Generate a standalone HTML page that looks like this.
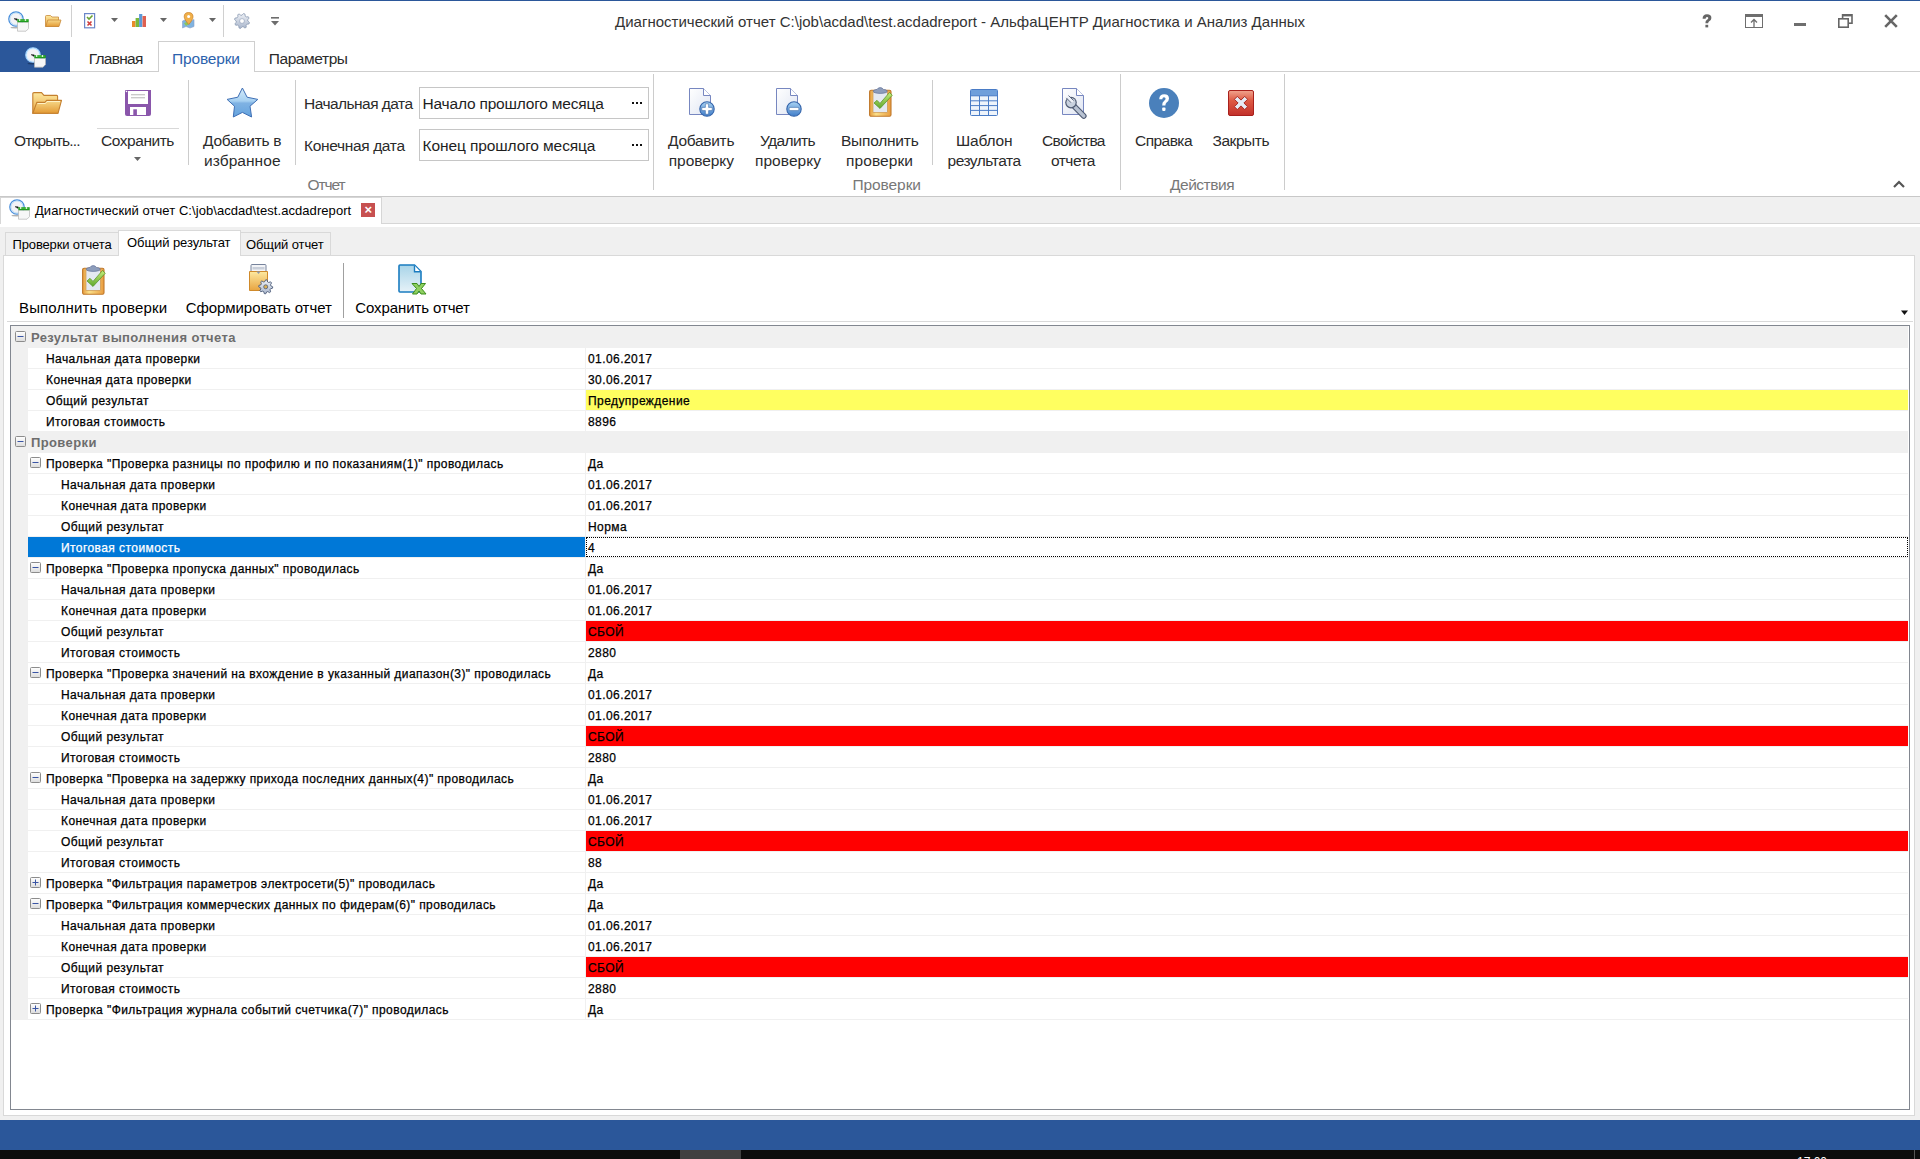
<!DOCTYPE html><html><head><meta charset="utf-8"><style>
html,body{margin:0;padding:0;}
body{width:1920px;height:1159px;position:relative;overflow:hidden;background:#fff;font-family:"Liberation Sans",sans-serif;}
.t{position:absolute;white-space:nowrap;}
.g{-webkit-text-stroke:0.25px currentColor;}
.r{position:absolute;}
</style></head><body>
<svg width="0" height="0" style="position:absolute"><defs>
<linearGradient id="eg" x1="0" y1="0" x2="0" y2="1"><stop offset="0" stop-color="#fff"/><stop offset="1" stop-color="#dcdcdc"/></linearGradient>
<linearGradient id="gFold" x1="0" y1="0" x2="0" y2="1"><stop offset="0" stop-color="#fde9a0"/><stop offset="1" stop-color="#e8a440"/></linearGradient>
<linearGradient id="gFoldF" x1="0" y1="0" x2="0" y2="1"><stop offset="0" stop-color="#f7d98a"/><stop offset="1" stop-color="#e39a34"/></linearGradient>
<linearGradient id="gDoc" x1="0" y1="0" x2="1" y2="1"><stop offset="0" stop-color="#ffffff"/><stop offset="1" stop-color="#dfe5f2"/></linearGradient>
<linearGradient id="gBall" x1="0" y1="0" x2="0" y2="1"><stop offset="0" stop-color="#a9d3f3"/><stop offset="1" stop-color="#3f7cc8"/></linearGradient>
<linearGradient id="gStar" x1="0" y1="0" x2="0" y2="1"><stop offset="0" stop-color="#d6ecfa"/><stop offset="0.45" stop-color="#a6d0f1"/><stop offset="0.52" stop-color="#7fb2e3"/><stop offset="1" stop-color="#64a3de"/></linearGradient>
<linearGradient id="gRed" x1="0" y1="0" x2="0" y2="1"><stop offset="0" stop-color="#f0a48e"/><stop offset="0.4" stop-color="#de5a44"/><stop offset="1" stop-color="#c2302a"/></linearGradient>
<linearGradient id="gClip" x1="0" y1="0" x2="1" y2="0"><stop offset="0" stop-color="#e59a3c"/><stop offset="0.3" stop-color="#fbe08a"/><stop offset="1" stop-color="#e99d3f"/></linearGradient>
<linearGradient id="gChk" x1="0" y1="0" x2="0" y2="1"><stop offset="0" stop-color="#c6ec7a"/><stop offset="1" stop-color="#5fa82c"/></linearGradient>
<linearGradient id="gGear" x1="0" y1="0" x2="0" y2="1"><stop offset="0" stop-color="#eef1f6"/><stop offset="1" stop-color="#a9b6cc"/></linearGradient>
<linearGradient id="gXl" x1="0" y1="0" x2="0" y2="1"><stop offset="0" stop-color="#a8d4e8"/><stop offset="1" stop-color="#e6f2f8"/></linearGradient>
</defs></svg>
<div class="r" style="left:0px;top:0px;width:1920px;height:1px;background:#2b579a;"></div>
<div class="r" style="left:71px;top:5px;width:1px;height:32px;background:#d0d0d0;"></div>
<div class="r" style="left:223px;top:5px;width:1px;height:32px;background:#d0d0d0;"></div>
<div class="t " style="left:615.0px;top:14.30px;font-size:15px;line-height:15px;color:#333;font-weight:normal;letter-spacing:0.012px;">Диагностический отчет C:\job\acdad\test.acdadreport - АльфаЦЕНТР Диагностика и Анализ Данных</div>
<div class="r" style="left:0px;top:41px;width:70px;height:31px;background:#2b579a;"></div>
<div class="r" style="left:70px;top:71px;width:88px;height:1px;background:#cfcfcf;"></div>
<div class="r" style="left:254px;top:71px;width:1666px;height:1px;background:#cfcfcf;"></div>
<div class="r" style="left:158px;top:41px;width:95px;height:30px;border:1px solid #cfcfcf;border-bottom:none;background:#fff"></div>
<div class="t " style="left:88.75px;top:51.48px;font-size:15.5px;line-height:15.5px;color:#2b2b2b;font-weight:normal;letter-spacing:-0.742px;">Главная</div>
<div class="t " style="left:172.0px;top:51.48px;font-size:15.5px;line-height:15.5px;color:#2c62ad;font-weight:normal;letter-spacing:-0.161px;">Проверки</div>
<div class="t " style="left:268.75px;top:51.48px;font-size:15.5px;line-height:15.5px;color:#2b2b2b;font-weight:normal;letter-spacing:-0.422px;">Параметры</div>
<div class="r" style="left:0px;top:196px;width:1920px;height:1px;background:#c8c8c8;"></div>
<div class="r" style="left:188px;top:80px;width:1px;height:85px;background:#cccccc;"></div>
<div class="r" style="left:295px;top:80px;width:1px;height:85px;background:#cccccc;"></div>
<div class="r" style="left:653px;top:74px;width:1px;height:116px;background:#cccccc;"></div>
<div class="r" style="left:932px;top:80px;width:1px;height:85px;background:#cccccc;"></div>
<div class="r" style="left:1120px;top:74px;width:1px;height:116px;background:#cccccc;"></div>
<div class="r" style="left:1284px;top:74px;width:1px;height:116px;background:#cccccc;"></div>
<div class="r" style="left:97px;top:128px;width:82px;height:1px;background:#d8d8d8;"></div>
<div class="t " style="left:14.0px;top:133.48px;font-size:15.5px;line-height:15.5px;color:#2b2b2b;font-weight:normal;letter-spacing:-0.806px;">Открыть...</div>
<div class="t " style="left:101.0px;top:133.48px;font-size:15.5px;line-height:15.5px;color:#2b2b2b;font-weight:normal;letter-spacing:-0.45px;">Сохранить</div>
<div class="t " style="left:203.0px;top:133.48px;font-size:15.5px;line-height:15.5px;color:#2b2b2b;font-weight:normal;letter-spacing:-0.278px;">Добавить в</div>
<div class="t " style="left:204.0px;top:153.48px;font-size:15.5px;line-height:15.5px;color:#2b2b2b;font-weight:normal;letter-spacing:0.059px;">избранное</div>
<div class="t " style="left:304.0px;top:95.98px;font-size:15.5px;line-height:15.5px;color:#2b2b2b;font-weight:normal;letter-spacing:-0.538px;">Начальная дата</div>
<div class="t " style="left:304.0px;top:137.98px;font-size:15.5px;line-height:15.5px;color:#2b2b2b;font-weight:normal;letter-spacing:-0.344px;">Конечная дата</div>
<div class="r" style="left:419px;top:87px;width:228px;height:30px;border:1px solid #c6c6c6;background:#fff"></div>
<div class="r" style="left:419px;top:129px;width:228px;height:30px;border:1px solid #c6c6c6;background:#fff"></div>
<div class="t " style="left:422.5px;top:95.98px;font-size:15.5px;line-height:15.5px;color:#1e1e1e;font-weight:normal;letter-spacing:-0.196px;">Начало прошлого месяца</div>
<div class="t " style="left:422.5px;top:137.98px;font-size:15.5px;line-height:15.5px;color:#1e1e1e;font-weight:normal;letter-spacing:-0.106px;">Конец прошлого месяца</div>
<div class="r" style="left:632px;top:102px;width:2px;height:2px;background:#111;"></div>
<div class="r" style="left:636px;top:102px;width:2px;height:2px;background:#111;"></div>
<div class="r" style="left:640px;top:102px;width:2px;height:2px;background:#111;"></div>
<div class="r" style="left:632px;top:144px;width:2px;height:2px;background:#111;"></div>
<div class="r" style="left:636px;top:144px;width:2px;height:2px;background:#111;"></div>
<div class="r" style="left:640px;top:144px;width:2px;height:2px;background:#111;"></div>
<div class="t " style="left:307.5px;top:176.98px;font-size:15.5px;line-height:15.5px;color:#777;font-weight:normal;letter-spacing:-1.1px;">Отчет</div>
<div class="t " style="left:668.0px;top:133.48px;font-size:15.5px;line-height:15.5px;color:#2b2b2b;font-weight:normal;letter-spacing:-0.286px;">Добавить</div>
<div class="t " style="left:668.75px;top:153.48px;font-size:15.5px;line-height:15.5px;color:#2b2b2b;font-weight:normal;letter-spacing:-0.054px;">проверку</div>
<div class="t " style="left:760.0px;top:133.48px;font-size:15.5px;line-height:15.5px;color:#2b2b2b;font-weight:normal;letter-spacing:-0.604px;">Удалить</div>
<div class="t " style="left:755.0px;top:153.48px;font-size:15.5px;line-height:15.5px;color:#2b2b2b;font-weight:normal;letter-spacing:0.054px;">проверку</div>
<div class="t " style="left:841.0px;top:133.48px;font-size:15.5px;line-height:15.5px;color:#2b2b2b;font-weight:normal;letter-spacing:-0.234px;">Выполнить</div>
<div class="t " style="left:846.0px;top:153.48px;font-size:15.5px;line-height:15.5px;color:#2b2b2b;font-weight:normal;letter-spacing:0.089px;">проверки</div>
<div class="t " style="left:956.0px;top:133.48px;font-size:15.5px;line-height:15.5px;color:#2b2b2b;font-weight:normal;letter-spacing:-0.175px;">Шаблон</div>
<div class="t " style="left:947.5px;top:153.48px;font-size:15.5px;line-height:15.5px;color:#2b2b2b;font-weight:normal;letter-spacing:-0.486px;">результата</div>
<div class="t " style="left:1042.0px;top:133.48px;font-size:15.5px;line-height:15.5px;color:#2b2b2b;font-weight:normal;letter-spacing:-0.661px;">Свойства</div>
<div class="t " style="left:1051.0px;top:153.48px;font-size:15.5px;line-height:15.5px;color:#2b2b2b;font-weight:normal;letter-spacing:-0.525px;">отчета</div>
<div class="t " style="left:852.5px;top:177.48px;font-size:15.5px;line-height:15.5px;color:#777;font-weight:normal;letter-spacing:-0.089px;">Проверки</div>
<div class="t " style="left:1135.0px;top:133.48px;font-size:15.5px;line-height:15.5px;color:#2b2b2b;font-weight:normal;letter-spacing:-0.542px;">Справка</div>
<div class="t " style="left:1212.5px;top:133.48px;font-size:15.5px;line-height:15.5px;color:#2b2b2b;font-weight:normal;letter-spacing:-0.458px;">Закрыть</div>
<div class="t " style="left:1170.0px;top:177.48px;font-size:15.5px;line-height:15.5px;color:#777;font-weight:normal;letter-spacing:-0.482px;">Действия</div>
<div class="r" style="left:0px;top:197px;width:1920px;height:923px;background:#f0f0f0;"></div>
<div class="r" style="left:0px;top:197px;width:381px;height:30px;background:#fff;"></div>
<div class="r" style="left:0px;top:197px;width:1px;height:28px;background:#d6d6d6;"></div>
<div class="r" style="left:0px;top:197px;width:381px;height:1px;background:#d6d6d6;"></div>
<div class="r" style="left:381px;top:197px;width:1px;height:27px;background:#d6d6d6;"></div>
<div class="r" style="left:382px;top:223px;width:1538px;height:1px;background:#d6d6d6;"></div>
<div class="r" style="left:0px;top:224px;width:1920px;height:3px;background:#fff;"></div>
<div class="t " style="left:35.0px;top:204.00px;font-size:13px;line-height:13px;color:#000;font-weight:normal;letter-spacing:0.062px;">Диагностический отчет C:\job\acdad\test.acdadreport</div>
<div class="r" style="left:361px;top:203px;width:14px;height:14px;background:#c75050;"></div>
<div class="t " style="left:364.5px;top:203.00px;font-size:13px;line-height:13px;color:#fff;font-weight:bold;letter-spacing:0px;">×</div>
<div class="r" style="left:5px;top:232px;width:112px;height:23px;border:1px solid #d9d9d9;border-bottom:none;background:#f0f0f0"></div>
<div class="r" style="left:240px;top:232px;width:89px;height:23px;border:1px solid #d9d9d9;border-bottom:none;background:#f0f0f0"></div>
<div class="r" style="left:118px;top:230px;width:121px;height:26px;border:1px solid #d9d9d9;border-bottom:none;background:#fff"></div>
<div class="t " style="left:12.5px;top:237.50px;font-size:13px;line-height:13px;color:#000;font-weight:normal;letter-spacing:-0.137px;">Проверки отчета</div>
<div class="t " style="left:127.0px;top:235.50px;font-size:13px;line-height:13px;color:#000;font-weight:normal;letter-spacing:-0.08px;">Общий результат</div>
<div class="t " style="left:246.0px;top:237.50px;font-size:13px;line-height:13px;color:#000;font-weight:normal;letter-spacing:-0.113px;">Общий отчет</div>
<div class="r" style="left:3px;top:255px;width:1910px;height:859px;border:1px solid #d9d9d9;background:#fff"></div>
<div class="r" style="left:119px;top:255px;width:121px;height:1px;background:#fff;"></div>
<div class="r" style="left:7px;top:321px;width:1906px;height:1px;background:#d9d9d9;"></div>
<div class="r" style="left:343px;top:263px;width:1px;height:55px;background:#a0a0a0;"></div>
<div class="t " style="left:19.0px;top:300.30px;font-size:15px;line-height:15px;color:#000;font-weight:normal;letter-spacing:0.154px;">Выполнить проверки</div>
<div class="t " style="left:185.8px;top:300.30px;font-size:15px;line-height:15px;color:#000;font-weight:normal;letter-spacing:-0.079px;">Сформировать отчет</div>
<div class="t " style="left:355.3px;top:300.30px;font-size:15px;line-height:15px;color:#000;font-weight:normal;letter-spacing:-0.102px;">Сохранить отчет</div>
<svg class="r" style="left:1900px;top:310px" width="9" height="6"><path d="M1 0.5h7L4.5 5z" fill="#111"/></svg>
<div class="r" style="left:10px;top:325px;width:1898px;height:783px;border:1px solid #828790;background:#fff"></div>
<svg width="0" height="0" style="position:absolute"><defs><linearGradient id="eg" x1="0" y1="0" x2="0" y2="1"><stop offset="0" stop-color="#fff"/><stop offset="1" stop-color="#dcdcdc"/></linearGradient></defs></svg>
<div class="r" style="left:11px;top:326px;width:1897px;height:21px;background:#f0f0f0;"></div>
<div class="r" style="left:11px;top:347px;width:1897px;height:1px;background:#f0f0f0;"></div>
<svg class="r" style="left:15px;top:331px" width="11" height="11" viewBox="0 0 11 11"><rect x="0.5" y="0.5" width="10" height="10" rx="1" fill="url(#eg)" stroke="#8c8c8c"/><path d="M2.5 5.5h6" stroke="#3a55a5" stroke-width="1"/></svg>
<div class="t " style="left:31px;top:330.50px;font-size:13px;line-height:13px;color:#6d6d6d;font-weight:bold;letter-spacing:0.38px;">Результат выполнения отчета</div>
<div class="r" style="left:11px;top:348px;width:17px;height:21px;background:#f0f0f0;"></div>
<div class="r" style="left:28px;top:368px;width:1880px;height:1px;background:#f0f0f0;"></div>
<div class="r" style="left:585px;top:348px;width:1px;height:20px;background:#f0f0f0;"></div>
<div class="t g" style="left:46px;top:352.84px;font-size:12px;line-height:12px;color:#000;font-weight:normal;letter-spacing:0.43px;">Начальная дата проверки</div>
<div class="t g" style="left:588px;top:352.84px;font-size:12px;line-height:12px;color:#000;font-weight:normal;letter-spacing:0.43px;">01.06.2017</div>
<div class="r" style="left:11px;top:369px;width:17px;height:21px;background:#f0f0f0;"></div>
<div class="r" style="left:28px;top:389px;width:1880px;height:1px;background:#f0f0f0;"></div>
<div class="r" style="left:585px;top:369px;width:1px;height:20px;background:#f0f0f0;"></div>
<div class="t g" style="left:46px;top:373.84px;font-size:12px;line-height:12px;color:#000;font-weight:normal;letter-spacing:0.43px;">Конечная дата проверки</div>
<div class="t g" style="left:588px;top:373.84px;font-size:12px;line-height:12px;color:#000;font-weight:normal;letter-spacing:0.43px;">30.06.2017</div>
<div class="r" style="left:11px;top:390px;width:17px;height:21px;background:#f0f0f0;"></div>
<div class="r" style="left:28px;top:410px;width:1880px;height:1px;background:#f0f0f0;"></div>
<div class="r" style="left:585px;top:390px;width:1px;height:20px;background:#f0f0f0;"></div>
<div class="t g" style="left:46px;top:394.84px;font-size:12px;line-height:12px;color:#000;font-weight:normal;letter-spacing:0.43px;">Общий результат</div>
<div class="r" style="left:586px;top:390px;width:1322px;height:20px;background:#ffff60;"></div>
<div class="t g" style="left:588px;top:394.84px;font-size:12px;line-height:12px;color:#000;font-weight:normal;letter-spacing:0.43px;">Предупреждение</div>
<div class="r" style="left:11px;top:411px;width:17px;height:21px;background:#f0f0f0;"></div>
<div class="r" style="left:28px;top:431px;width:1880px;height:1px;background:#f0f0f0;"></div>
<div class="r" style="left:585px;top:411px;width:1px;height:20px;background:#f0f0f0;"></div>
<div class="t g" style="left:46px;top:415.84px;font-size:12px;line-height:12px;color:#000;font-weight:normal;letter-spacing:0.43px;">Итоговая стоимость</div>
<div class="t g" style="left:588px;top:415.84px;font-size:12px;line-height:12px;color:#000;font-weight:normal;letter-spacing:0.43px;">8896</div>
<div class="r" style="left:11px;top:431px;width:1897px;height:21px;background:#f0f0f0;"></div>
<div class="r" style="left:11px;top:452px;width:1897px;height:1px;background:#f0f0f0;"></div>
<svg class="r" style="left:15px;top:436px" width="11" height="11" viewBox="0 0 11 11"><rect x="0.5" y="0.5" width="10" height="10" rx="1" fill="url(#eg)" stroke="#8c8c8c"/><path d="M2.5 5.5h6" stroke="#3a55a5" stroke-width="1"/></svg>
<div class="t " style="left:31px;top:435.50px;font-size:13px;line-height:13px;color:#6d6d6d;font-weight:bold;letter-spacing:0.38px;">Проверки</div>
<div class="r" style="left:11px;top:453px;width:17px;height:21px;background:#f0f0f0;"></div>
<div class="r" style="left:28px;top:473px;width:1880px;height:1px;background:#f0f0f0;"></div>
<div class="r" style="left:585px;top:453px;width:1px;height:20px;background:#f0f0f0;"></div>
<svg class="r" style="left:30px;top:457px" width="11" height="11" viewBox="0 0 11 11"><rect x="0.5" y="0.5" width="10" height="10" rx="1" fill="url(#eg)" stroke="#8c8c8c"/><path d="M2.5 5.5h6" stroke="#3a55a5" stroke-width="1"/></svg>
<div class="t g" style="left:46px;top:457.84px;font-size:12px;line-height:12px;color:#000;font-weight:normal;letter-spacing:0.43px;">Проверка &quot;Проверка разницы по профилю и по показаниям(1)&quot; проводилась</div>
<div class="t g" style="left:588px;top:457.84px;font-size:12px;line-height:12px;color:#000;font-weight:normal;letter-spacing:0.43px;">Да</div>
<div class="r" style="left:11px;top:474px;width:17px;height:21px;background:#f0f0f0;"></div>
<div class="r" style="left:28px;top:494px;width:1880px;height:1px;background:#f0f0f0;"></div>
<div class="r" style="left:585px;top:474px;width:1px;height:20px;background:#f0f0f0;"></div>
<div class="t g" style="left:61px;top:478.84px;font-size:12px;line-height:12px;color:#000;font-weight:normal;letter-spacing:0.43px;">Начальная дата проверки</div>
<div class="t g" style="left:588px;top:478.84px;font-size:12px;line-height:12px;color:#000;font-weight:normal;letter-spacing:0.43px;">01.06.2017</div>
<div class="r" style="left:11px;top:495px;width:17px;height:21px;background:#f0f0f0;"></div>
<div class="r" style="left:28px;top:515px;width:1880px;height:1px;background:#f0f0f0;"></div>
<div class="r" style="left:585px;top:495px;width:1px;height:20px;background:#f0f0f0;"></div>
<div class="t g" style="left:61px;top:499.84px;font-size:12px;line-height:12px;color:#000;font-weight:normal;letter-spacing:0.43px;">Конечная дата проверки</div>
<div class="t g" style="left:588px;top:499.84px;font-size:12px;line-height:12px;color:#000;font-weight:normal;letter-spacing:0.43px;">01.06.2017</div>
<div class="r" style="left:11px;top:516px;width:17px;height:21px;background:#f0f0f0;"></div>
<div class="r" style="left:28px;top:536px;width:1880px;height:1px;background:#f0f0f0;"></div>
<div class="r" style="left:585px;top:516px;width:1px;height:20px;background:#f0f0f0;"></div>
<div class="t g" style="left:61px;top:520.84px;font-size:12px;line-height:12px;color:#000;font-weight:normal;letter-spacing:0.43px;">Общий результат</div>
<div class="t g" style="left:588px;top:520.84px;font-size:12px;line-height:12px;color:#000;font-weight:normal;letter-spacing:0.43px;">Норма</div>
<div class="r" style="left:11px;top:537px;width:17px;height:21px;background:#f0f0f0;"></div>
<div class="r" style="left:28px;top:557px;width:1880px;height:1px;background:#f0f0f0;"></div>
<div class="r" style="left:585px;top:537px;width:1px;height:20px;background:#f0f0f0;"></div>
<div class="r" style="left:28px;top:537px;width:557px;height:20px;background:#0078d7;"></div>
<div class="t g" style="left:61px;top:541.84px;font-size:12px;line-height:12px;color:#fff;font-weight:normal;letter-spacing:0.43px;">Итоговая стоимость</div>
<div class="r" style="left:586px;top:537px;width:1320px;height:18px;border:1px dotted #000"></div>
<div class="t g" style="left:588px;top:541.84px;font-size:12px;line-height:12px;color:#000;font-weight:normal;letter-spacing:0.43px;">4</div>
<div class="r" style="left:11px;top:558px;width:17px;height:21px;background:#f0f0f0;"></div>
<div class="r" style="left:28px;top:578px;width:1880px;height:1px;background:#f0f0f0;"></div>
<div class="r" style="left:585px;top:558px;width:1px;height:20px;background:#f0f0f0;"></div>
<svg class="r" style="left:30px;top:562px" width="11" height="11" viewBox="0 0 11 11"><rect x="0.5" y="0.5" width="10" height="10" rx="1" fill="url(#eg)" stroke="#8c8c8c"/><path d="M2.5 5.5h6" stroke="#3a55a5" stroke-width="1"/></svg>
<div class="t g" style="left:46px;top:562.84px;font-size:12px;line-height:12px;color:#000;font-weight:normal;letter-spacing:0.43px;">Проверка &quot;Проверка пропуска данных&quot; проводилась</div>
<div class="t g" style="left:588px;top:562.84px;font-size:12px;line-height:12px;color:#000;font-weight:normal;letter-spacing:0.43px;">Да</div>
<div class="r" style="left:11px;top:579px;width:17px;height:21px;background:#f0f0f0;"></div>
<div class="r" style="left:28px;top:599px;width:1880px;height:1px;background:#f0f0f0;"></div>
<div class="r" style="left:585px;top:579px;width:1px;height:20px;background:#f0f0f0;"></div>
<div class="t g" style="left:61px;top:583.84px;font-size:12px;line-height:12px;color:#000;font-weight:normal;letter-spacing:0.43px;">Начальная дата проверки</div>
<div class="t g" style="left:588px;top:583.84px;font-size:12px;line-height:12px;color:#000;font-weight:normal;letter-spacing:0.43px;">01.06.2017</div>
<div class="r" style="left:11px;top:600px;width:17px;height:21px;background:#f0f0f0;"></div>
<div class="r" style="left:28px;top:620px;width:1880px;height:1px;background:#f0f0f0;"></div>
<div class="r" style="left:585px;top:600px;width:1px;height:20px;background:#f0f0f0;"></div>
<div class="t g" style="left:61px;top:604.84px;font-size:12px;line-height:12px;color:#000;font-weight:normal;letter-spacing:0.43px;">Конечная дата проверки</div>
<div class="t g" style="left:588px;top:604.84px;font-size:12px;line-height:12px;color:#000;font-weight:normal;letter-spacing:0.43px;">01.06.2017</div>
<div class="r" style="left:11px;top:621px;width:17px;height:21px;background:#f0f0f0;"></div>
<div class="r" style="left:28px;top:641px;width:1880px;height:1px;background:#f0f0f0;"></div>
<div class="r" style="left:585px;top:621px;width:1px;height:20px;background:#f0f0f0;"></div>
<div class="t g" style="left:61px;top:625.84px;font-size:12px;line-height:12px;color:#000;font-weight:normal;letter-spacing:0.43px;">Общий результат</div>
<div class="r" style="left:586px;top:621px;width:1322px;height:20px;background:#ff0000;"></div>
<div class="t g" style="left:588px;top:625.84px;font-size:12px;line-height:12px;color:#000;font-weight:normal;letter-spacing:0.43px;">СБОЙ</div>
<div class="r" style="left:11px;top:642px;width:17px;height:21px;background:#f0f0f0;"></div>
<div class="r" style="left:28px;top:662px;width:1880px;height:1px;background:#f0f0f0;"></div>
<div class="r" style="left:585px;top:642px;width:1px;height:20px;background:#f0f0f0;"></div>
<div class="t g" style="left:61px;top:646.84px;font-size:12px;line-height:12px;color:#000;font-weight:normal;letter-spacing:0.43px;">Итоговая стоимость</div>
<div class="t g" style="left:588px;top:646.84px;font-size:12px;line-height:12px;color:#000;font-weight:normal;letter-spacing:0.43px;">2880</div>
<div class="r" style="left:11px;top:663px;width:17px;height:21px;background:#f0f0f0;"></div>
<div class="r" style="left:28px;top:683px;width:1880px;height:1px;background:#f0f0f0;"></div>
<div class="r" style="left:585px;top:663px;width:1px;height:20px;background:#f0f0f0;"></div>
<svg class="r" style="left:30px;top:667px" width="11" height="11" viewBox="0 0 11 11"><rect x="0.5" y="0.5" width="10" height="10" rx="1" fill="url(#eg)" stroke="#8c8c8c"/><path d="M2.5 5.5h6" stroke="#3a55a5" stroke-width="1"/></svg>
<div class="t g" style="left:46px;top:667.84px;font-size:12px;line-height:12px;color:#000;font-weight:normal;letter-spacing:0.43px;">Проверка &quot;Проверка значений на вхождение в указанный диапазон(3)&quot; проводилась</div>
<div class="t g" style="left:588px;top:667.84px;font-size:12px;line-height:12px;color:#000;font-weight:normal;letter-spacing:0.43px;">Да</div>
<div class="r" style="left:11px;top:684px;width:17px;height:21px;background:#f0f0f0;"></div>
<div class="r" style="left:28px;top:704px;width:1880px;height:1px;background:#f0f0f0;"></div>
<div class="r" style="left:585px;top:684px;width:1px;height:20px;background:#f0f0f0;"></div>
<div class="t g" style="left:61px;top:688.84px;font-size:12px;line-height:12px;color:#000;font-weight:normal;letter-spacing:0.43px;">Начальная дата проверки</div>
<div class="t g" style="left:588px;top:688.84px;font-size:12px;line-height:12px;color:#000;font-weight:normal;letter-spacing:0.43px;">01.06.2017</div>
<div class="r" style="left:11px;top:705px;width:17px;height:21px;background:#f0f0f0;"></div>
<div class="r" style="left:28px;top:725px;width:1880px;height:1px;background:#f0f0f0;"></div>
<div class="r" style="left:585px;top:705px;width:1px;height:20px;background:#f0f0f0;"></div>
<div class="t g" style="left:61px;top:709.84px;font-size:12px;line-height:12px;color:#000;font-weight:normal;letter-spacing:0.43px;">Конечная дата проверки</div>
<div class="t g" style="left:588px;top:709.84px;font-size:12px;line-height:12px;color:#000;font-weight:normal;letter-spacing:0.43px;">01.06.2017</div>
<div class="r" style="left:11px;top:726px;width:17px;height:21px;background:#f0f0f0;"></div>
<div class="r" style="left:28px;top:746px;width:1880px;height:1px;background:#f0f0f0;"></div>
<div class="r" style="left:585px;top:726px;width:1px;height:20px;background:#f0f0f0;"></div>
<div class="t g" style="left:61px;top:730.84px;font-size:12px;line-height:12px;color:#000;font-weight:normal;letter-spacing:0.43px;">Общий результат</div>
<div class="r" style="left:586px;top:726px;width:1322px;height:20px;background:#ff0000;"></div>
<div class="t g" style="left:588px;top:730.84px;font-size:12px;line-height:12px;color:#000;font-weight:normal;letter-spacing:0.43px;">СБОЙ</div>
<div class="r" style="left:11px;top:747px;width:17px;height:21px;background:#f0f0f0;"></div>
<div class="r" style="left:28px;top:767px;width:1880px;height:1px;background:#f0f0f0;"></div>
<div class="r" style="left:585px;top:747px;width:1px;height:20px;background:#f0f0f0;"></div>
<div class="t g" style="left:61px;top:751.84px;font-size:12px;line-height:12px;color:#000;font-weight:normal;letter-spacing:0.43px;">Итоговая стоимость</div>
<div class="t g" style="left:588px;top:751.84px;font-size:12px;line-height:12px;color:#000;font-weight:normal;letter-spacing:0.43px;">2880</div>
<div class="r" style="left:11px;top:768px;width:17px;height:21px;background:#f0f0f0;"></div>
<div class="r" style="left:28px;top:788px;width:1880px;height:1px;background:#f0f0f0;"></div>
<div class="r" style="left:585px;top:768px;width:1px;height:20px;background:#f0f0f0;"></div>
<svg class="r" style="left:30px;top:772px" width="11" height="11" viewBox="0 0 11 11"><rect x="0.5" y="0.5" width="10" height="10" rx="1" fill="url(#eg)" stroke="#8c8c8c"/><path d="M2.5 5.5h6" stroke="#3a55a5" stroke-width="1"/></svg>
<div class="t g" style="left:46px;top:772.84px;font-size:12px;line-height:12px;color:#000;font-weight:normal;letter-spacing:0.43px;">Проверка &quot;Проверка на задержку прихода последних данных(4)&quot; проводилась</div>
<div class="t g" style="left:588px;top:772.84px;font-size:12px;line-height:12px;color:#000;font-weight:normal;letter-spacing:0.43px;">Да</div>
<div class="r" style="left:11px;top:789px;width:17px;height:21px;background:#f0f0f0;"></div>
<div class="r" style="left:28px;top:809px;width:1880px;height:1px;background:#f0f0f0;"></div>
<div class="r" style="left:585px;top:789px;width:1px;height:20px;background:#f0f0f0;"></div>
<div class="t g" style="left:61px;top:793.84px;font-size:12px;line-height:12px;color:#000;font-weight:normal;letter-spacing:0.43px;">Начальная дата проверки</div>
<div class="t g" style="left:588px;top:793.84px;font-size:12px;line-height:12px;color:#000;font-weight:normal;letter-spacing:0.43px;">01.06.2017</div>
<div class="r" style="left:11px;top:810px;width:17px;height:21px;background:#f0f0f0;"></div>
<div class="r" style="left:28px;top:830px;width:1880px;height:1px;background:#f0f0f0;"></div>
<div class="r" style="left:585px;top:810px;width:1px;height:20px;background:#f0f0f0;"></div>
<div class="t g" style="left:61px;top:814.84px;font-size:12px;line-height:12px;color:#000;font-weight:normal;letter-spacing:0.43px;">Конечная дата проверки</div>
<div class="t g" style="left:588px;top:814.84px;font-size:12px;line-height:12px;color:#000;font-weight:normal;letter-spacing:0.43px;">01.06.2017</div>
<div class="r" style="left:11px;top:831px;width:17px;height:21px;background:#f0f0f0;"></div>
<div class="r" style="left:28px;top:851px;width:1880px;height:1px;background:#f0f0f0;"></div>
<div class="r" style="left:585px;top:831px;width:1px;height:20px;background:#f0f0f0;"></div>
<div class="t g" style="left:61px;top:835.84px;font-size:12px;line-height:12px;color:#000;font-weight:normal;letter-spacing:0.43px;">Общий результат</div>
<div class="r" style="left:586px;top:831px;width:1322px;height:20px;background:#ff0000;"></div>
<div class="t g" style="left:588px;top:835.84px;font-size:12px;line-height:12px;color:#000;font-weight:normal;letter-spacing:0.43px;">СБОЙ</div>
<div class="r" style="left:11px;top:852px;width:17px;height:21px;background:#f0f0f0;"></div>
<div class="r" style="left:28px;top:872px;width:1880px;height:1px;background:#f0f0f0;"></div>
<div class="r" style="left:585px;top:852px;width:1px;height:20px;background:#f0f0f0;"></div>
<div class="t g" style="left:61px;top:856.84px;font-size:12px;line-height:12px;color:#000;font-weight:normal;letter-spacing:0.43px;">Итоговая стоимость</div>
<div class="t g" style="left:588px;top:856.84px;font-size:12px;line-height:12px;color:#000;font-weight:normal;letter-spacing:0.43px;">88</div>
<div class="r" style="left:11px;top:873px;width:17px;height:21px;background:#f0f0f0;"></div>
<div class="r" style="left:28px;top:893px;width:1880px;height:1px;background:#f0f0f0;"></div>
<div class="r" style="left:585px;top:873px;width:1px;height:20px;background:#f0f0f0;"></div>
<svg class="r" style="left:30px;top:877px" width="11" height="11" viewBox="0 0 11 11"><rect x="0.5" y="0.5" width="10" height="10" rx="1" fill="url(#eg)" stroke="#8c8c8c"/><path d="M2.5 5.5h6" stroke="#3a55a5" stroke-width="1"/><path d="M5.5 2.5v6" stroke="#3a55a5" stroke-width="1"/></svg>
<div class="t g" style="left:46px;top:877.84px;font-size:12px;line-height:12px;color:#000;font-weight:normal;letter-spacing:0.43px;">Проверка &quot;Фильтрация параметров электросети(5)&quot; проводилась</div>
<div class="t g" style="left:588px;top:877.84px;font-size:12px;line-height:12px;color:#000;font-weight:normal;letter-spacing:0.43px;">Да</div>
<div class="r" style="left:11px;top:894px;width:17px;height:21px;background:#f0f0f0;"></div>
<div class="r" style="left:28px;top:914px;width:1880px;height:1px;background:#f0f0f0;"></div>
<div class="r" style="left:585px;top:894px;width:1px;height:20px;background:#f0f0f0;"></div>
<svg class="r" style="left:30px;top:898px" width="11" height="11" viewBox="0 0 11 11"><rect x="0.5" y="0.5" width="10" height="10" rx="1" fill="url(#eg)" stroke="#8c8c8c"/><path d="M2.5 5.5h6" stroke="#3a55a5" stroke-width="1"/></svg>
<div class="t g" style="left:46px;top:898.84px;font-size:12px;line-height:12px;color:#000;font-weight:normal;letter-spacing:0.43px;">Проверка &quot;Фильтрация коммерческих данных по фидерам(6)&quot; проводилась</div>
<div class="t g" style="left:588px;top:898.84px;font-size:12px;line-height:12px;color:#000;font-weight:normal;letter-spacing:0.43px;">Да</div>
<div class="r" style="left:11px;top:915px;width:17px;height:21px;background:#f0f0f0;"></div>
<div class="r" style="left:28px;top:935px;width:1880px;height:1px;background:#f0f0f0;"></div>
<div class="r" style="left:585px;top:915px;width:1px;height:20px;background:#f0f0f0;"></div>
<div class="t g" style="left:61px;top:919.84px;font-size:12px;line-height:12px;color:#000;font-weight:normal;letter-spacing:0.43px;">Начальная дата проверки</div>
<div class="t g" style="left:588px;top:919.84px;font-size:12px;line-height:12px;color:#000;font-weight:normal;letter-spacing:0.43px;">01.06.2017</div>
<div class="r" style="left:11px;top:936px;width:17px;height:21px;background:#f0f0f0;"></div>
<div class="r" style="left:28px;top:956px;width:1880px;height:1px;background:#f0f0f0;"></div>
<div class="r" style="left:585px;top:936px;width:1px;height:20px;background:#f0f0f0;"></div>
<div class="t g" style="left:61px;top:940.84px;font-size:12px;line-height:12px;color:#000;font-weight:normal;letter-spacing:0.43px;">Конечная дата проверки</div>
<div class="t g" style="left:588px;top:940.84px;font-size:12px;line-height:12px;color:#000;font-weight:normal;letter-spacing:0.43px;">01.06.2017</div>
<div class="r" style="left:11px;top:957px;width:17px;height:21px;background:#f0f0f0;"></div>
<div class="r" style="left:28px;top:977px;width:1880px;height:1px;background:#f0f0f0;"></div>
<div class="r" style="left:585px;top:957px;width:1px;height:20px;background:#f0f0f0;"></div>
<div class="t g" style="left:61px;top:961.84px;font-size:12px;line-height:12px;color:#000;font-weight:normal;letter-spacing:0.43px;">Общий результат</div>
<div class="r" style="left:586px;top:957px;width:1322px;height:20px;background:#ff0000;"></div>
<div class="t g" style="left:588px;top:961.84px;font-size:12px;line-height:12px;color:#000;font-weight:normal;letter-spacing:0.43px;">СБОЙ</div>
<div class="r" style="left:11px;top:978px;width:17px;height:21px;background:#f0f0f0;"></div>
<div class="r" style="left:28px;top:998px;width:1880px;height:1px;background:#f0f0f0;"></div>
<div class="r" style="left:585px;top:978px;width:1px;height:20px;background:#f0f0f0;"></div>
<div class="t g" style="left:61px;top:982.84px;font-size:12px;line-height:12px;color:#000;font-weight:normal;letter-spacing:0.43px;">Итоговая стоимость</div>
<div class="t g" style="left:588px;top:982.84px;font-size:12px;line-height:12px;color:#000;font-weight:normal;letter-spacing:0.43px;">2880</div>
<div class="r" style="left:11px;top:999px;width:17px;height:21px;background:#f0f0f0;"></div>
<div class="r" style="left:28px;top:1019px;width:1880px;height:1px;background:#f0f0f0;"></div>
<div class="r" style="left:585px;top:999px;width:1px;height:20px;background:#f0f0f0;"></div>
<svg class="r" style="left:30px;top:1003px" width="11" height="11" viewBox="0 0 11 11"><rect x="0.5" y="0.5" width="10" height="10" rx="1" fill="url(#eg)" stroke="#8c8c8c"/><path d="M2.5 5.5h6" stroke="#3a55a5" stroke-width="1"/><path d="M5.5 2.5v6" stroke="#3a55a5" stroke-width="1"/></svg>
<div class="t g" style="left:46px;top:1003.84px;font-size:12px;line-height:12px;color:#000;font-weight:normal;letter-spacing:0.43px;">Проверка &quot;Фильтрация журнала событий счетчика(7)&quot; проводилась</div>
<div class="t g" style="left:588px;top:1003.84px;font-size:12px;line-height:12px;color:#000;font-weight:normal;letter-spacing:0.43px;">Да</div>
<svg class="r" style="left:8px;top:11px" width="23" height="23" viewBox="0 0 23 23"><g transform="scale(1.0)"><ellipse cx="7.5" cy="16.6" rx="5" ry="0.9" fill="#000" opacity="0.3"/><circle cx="8" cy="8" r="7.2" fill="#f3f2f6" stroke="#4a8fdc" stroke-width="1.3"/><circle cx="8" cy="8" r="6" fill="none" stroke="#a9d8f6" stroke-width="0.7"/><path d="M8.3 8.2L6.2 7.6" stroke="#222" stroke-width="1.1"/><circle cx="8.6" cy="8.4" r="1" fill="#111"/><path d="M9.5 11.2H20.5V17.6L18 20.2H9.5Z" fill="#f7f7f7" stroke="#b5b5b5" stroke-width="0.7"/><rect x="9.3" y="8.2" width="11.4" height="3" fill="#1e9a1e"/><rect x="10.4" y="8.7" width="9.2" height="1" fill="#5fcf4f" opacity="0.7"/><rect x="11" y="8.2" width="1.3" height="1.6" fill="#fff"/><rect x="16.8" y="8.2" width="1.3" height="1.6" fill="#fff"/></g></svg>
<svg class="r" style="left:45px;top:15px" width="17" height="13" viewBox="0 0 17 13"><path d="M0.5 1.5Q0.5 0.5 1.5 0.5H5.5L7 2H13.5V11.5H0.5Z" fill="url(#gFold)" stroke="#c98a3a" stroke-width="0.8"/><path d="M2.8 5H16L14 11.5H0.8Z" fill="url(#gFoldF)" stroke="#c98a3a" stroke-width="0.8"/></svg>
<svg class="r" style="left:84px;top:13px" width="12" height="16" viewBox="0 0 12 16"><rect x="0.6" y="0.6" width="10" height="14.2" fill="#fff" stroke="#6b86c8" stroke-width="1.2"/><path d="M3 4L5 6L8.5 2.5" stroke="#6aa334" stroke-width="1.6" fill="none"/><path d="M3.5 8.5L7.5 12.5M7.5 8.5L3.5 12.5" stroke="#cf3b3b" stroke-width="1.6"/></svg>
<svg class="r" style="left:111px;top:18px" width="7" height="4" viewBox="0 0 7 4"><path d="M0 0H7L3.5 4Z" fill="#666"/></svg>
<svg class="r" style="left:132px;top:14px" width="14" height="13" viewBox="0 0 14 13"><rect x="0" y="7" width="3.5" height="6" fill="#e98b2a"/><rect x="3.6" y="4" width="3.4" height="9" fill="#7ab83c"/><rect x="7.1" y="0" width="3.2" height="13" fill="#5b9ad8"/><rect x="10.5" y="2" width="3.5" height="11" fill="#de6050"/></svg>
<svg class="r" style="left:160px;top:18px" width="7" height="4" viewBox="0 0 7 4"><path d="M0 0H7L3.5 4Z" fill="#666"/></svg>
<svg class="r" style="left:182px;top:12px" width="13" height="17" viewBox="0 0 13 17"><path d="M0.5 9L4 7.5L8 9.5L12 7.5V14.5L8 16L4 14.5L0.5 16Z" fill="#7fb3e0" stroke="#8ca0c8" stroke-width="0.6"/><path d="M2 11L5 10L7 12L4 14Z" fill="#8cc65a"/><path d="M6.5 0.5Q11 0.5 11 4.8Q11 7.5 6.8 12.5Q2.2 7.5 2.2 4.8Q2.2 0.5 6.5 0.5Z" fill="#f1b04a" stroke="#c97e22" stroke-width="0.7"/><circle cx="6.6" cy="4.6" r="1.5" fill="#fff"/></svg>
<svg class="r" style="left:209px;top:18px" width="7" height="4" viewBox="0 0 7 4"><path d="M0 0H7L3.5 4Z" fill="#666"/></svg>
<svg class="r" style="left:234px;top:13px" width="16" height="16" viewBox="0 0 16 16"><polygon points="15.45,9.48 15.02,10.91 12.82,11.22 12.10,12.10 12.22,14.32 10.91,15.02 9.13,13.69 8.00,13.80 6.52,15.45 5.09,15.02 4.78,12.82 3.90,12.10 1.68,12.22 0.98,10.91 2.31,9.13 2.20,8.00 0.55,6.52 0.98,5.09 3.18,4.78 3.90,3.90 3.78,1.68 5.09,0.98 6.87,2.31 8.00,2.20 9.48,0.55 10.91,0.98 11.22,3.18 12.10,3.90 14.32,3.78 15.02,5.09 13.69,6.87 13.80,8.00" fill="url(#gGear)" stroke="#8a99b3" stroke-width="0.8" stroke-linejoin="round"/><circle cx="8" cy="8" r="2.4" fill="#fff" stroke="#8a99b3" stroke-width="0.6"/></svg>
<svg class="r" style="left:270px;top:16px" width="10" height="10" viewBox="0 0 10 10"><rect x="1" y="1" width="8" height="1.6" fill="#6d6d6d"/><path d="M1 5H9L5 9.5Z" fill="#6d6d6d"/></svg>
<svg class="r" style="left:1700px;top:13px" width="14" height="16" viewBox="0 0 14 16"><path d="M2.6 5.8Q2.6 1.2 7 1.2Q11.4 1.2 11.4 4.9Q11.4 7.1 9 8.5Q8.2 9 8.2 10.2H5.4Q5.3 7.8 7 6.8Q8.3 6 8.3 5Q8.3 4 7 4Q5.7 4 5.6 5.8Z" fill="#666"/><rect x="5.4" y="11.8" width="2.8" height="2.6" fill="#666"/></svg>
<svg class="r" style="left:1745px;top:14px" width="18" height="14" viewBox="0 0 18 14"><rect x="0.5" y="0.5" width="17" height="13" fill="none" stroke="#6e6e6e"/><rect x="1" y="1" width="16" height="2" fill="#6e6e6e"/><path d="M9 13V6M6 8.5L9 5.5L12 8.5" stroke="#6e6e6e" stroke-width="1.3" fill="none"/></svg>
<svg class="r" style="left:1794px;top:23px" width="12" height="3" viewBox="0 0 12 3"><rect width="12" height="3" fill="#6e6e6e"/></svg>
<svg class="r" style="left:1838px;top:14px" width="15" height="14" viewBox="0 0 15 14"><rect x="4.6" y="0.8" width="9.4" height="8.4" fill="none" stroke="#666" stroke-width="1.6"/><rect x="4.6" y="0.8" width="9.4" height="1.6" fill="#666"/><rect x="0.8" y="4.8" width="9.4" height="8.4" fill="#fff" stroke="#666" stroke-width="1.6"/></svg>
<svg class="r" style="left:1884px;top:14px" width="14" height="14" viewBox="0 0 14 14"><path d="M1.2 1.2L12.8 12.8M12.8 1.2L1.2 12.8" stroke="#666" stroke-width="2.6"/></svg>
<svg class="r" style="left:25px;top:47px" width="23" height="23" viewBox="0 0 23 23"><g transform="scale(1.0)"><ellipse cx="7.5" cy="16.6" rx="5" ry="0.9" fill="#000" opacity="0.3"/><circle cx="8" cy="8" r="7.2" fill="#f3f2f6" stroke="#9fd3ff" stroke-width="1.3"/><circle cx="8" cy="8" r="6" fill="none" stroke="#d8f0ff" stroke-width="0.7"/><path d="M8.3 8.2L6.2 7.6" stroke="#222" stroke-width="1.1"/><circle cx="8.6" cy="8.4" r="1" fill="#111"/><path d="M9.5 11.2H20.5V17.6L18 20.2H9.5Z" fill="#f7f7f7" stroke="#b5b5b5" stroke-width="0.7"/><rect x="9.3" y="8.2" width="11.4" height="3" fill="#1e9a1e"/><rect x="10.4" y="8.7" width="9.2" height="1" fill="#5fcf4f" opacity="0.7"/><rect x="11" y="8.2" width="1.3" height="1.6" fill="#fff"/><rect x="16.8" y="8.2" width="1.3" height="1.6" fill="#fff"/></g></svg>
<svg class="r" style="left:32px;top:92px" width="31" height="23" viewBox="0 0 31 23"><path d="M0.8 1.8Q0.8 0.6 2 0.6H9.5L12 3.4H24.8Q25.6 3.4 25.6 4.4V21.3H0.8Z" fill="url(#gFold)" stroke="#c47f2e" stroke-width="1.1"/><path d="M4.8 10.4H13L14.6 8.4H29.5L26 21.3H0.8Z" fill="url(#gFoldF)" stroke="#c47f2e" stroke-width="1.1" stroke-linejoin="round"/><path d="M5.5 11.5H13.4L15 9.5H28" stroke="#fff6d0" stroke-width="0.9" fill="none"/></svg>
<svg class="r" style="left:125px;top:90px" width="26" height="26" viewBox="0 0 26 26"><path d="M0 1Q0 0 1 0H26V24Q26 26 24 26H2Q0 26 0 24Z" fill="#8a56ab"/><rect x="3" y="1" width="20" height="13" fill="#fff"/><rect x="6" y="4.2" width="14" height="1.1" fill="#bdbdbd"/><rect x="6" y="7.2" width="14" height="1.1" fill="#bdbdbd"/><rect x="5" y="17" width="16" height="8" fill="#fff"/><rect x="8.3" y="19.3" width="3.6" height="5.7" fill="#8a56ab"/><circle cx="1.5" cy="1.5" r="0.8" fill="#fff"/></svg>
<svg class="r" style="left:134px;top:157px" width="7" height="4" viewBox="0 0 7 4"><path d="M0 0H7L3.5 4Z" fill="#666"/></svg>
<svg class="r" style="left:226px;top:87px" width="33" height="32" viewBox="0 0 33 32"><polygon points="16.4,1.0 21.1,10.2 31.8,12.4 24.0,19.2 25.6,30.0 16.4,25.4 7.3,30.0 8.5,19.2 1.1,12.4 11.8,10.2" fill="url(#gStar)" stroke="#3f6fb5" stroke-width="1" stroke-linejoin="round"/></svg>
<svg class="r" style="left:689px;top:88px" width="27" height="30" viewBox="0 0 27 30"><path d="M0.5 0.5H14.5L21.5 7.5V26.5H0.5Z" fill="url(#gDoc)" stroke="#7787c0" stroke-width="1"/><path d="M14.5 0.5V7.5H21.5" fill="#fff" stroke="#7787c0" stroke-width="1"/><circle cx="18" cy="21" r="7.2" fill="url(#gBall)" stroke="#3464aa" stroke-width="1.1"/><path d="M16.4 15.8H19.6V19.4H23.2V22.6H19.6V26.2H16.4V22.6H12.8V19.4H16.4Z" fill="#fff" stroke="#2f5c9c" stroke-width="0.5"/></svg>
<svg class="r" style="left:776px;top:88px" width="27" height="30" viewBox="0 0 27 30"><path d="M0.5 0.5H14.5L21.5 7.5V26.5H0.5Z" fill="url(#gDoc)" stroke="#7787c0" stroke-width="1"/><path d="M14.5 0.5V7.5H21.5" fill="#fff" stroke="#7787c0" stroke-width="1"/><circle cx="18" cy="21" r="7.2" fill="url(#gBall)" stroke="#3464aa" stroke-width="1.1"/><rect x="13.2" y="19.4" width="9.6" height="3.2" rx="0.6" fill="#fff" stroke="#2f5c9c" stroke-width="0.5"/></svg>
<svg class="r" style="left:869px;top:87px" width="25" height="32" viewBox="0 0 25 32"><g transform="scale(1.0)"><rect x="0.6" y="3.2" width="21.4" height="26" rx="1.5" fill="url(#gClip)" stroke="#c0782a" stroke-width="1.1"/><rect x="4" y="5" width="14.5" height="20.5" fill="#e4e9f1" stroke="#c98a3a" stroke-width="0.6"/><path d="M4.2 4.2Q4.5 2.6 8 2.4Q9 0.6 11.2 0.6Q13.4 0.6 14.4 2.4Q18 2.6 18.3 4.2Q18 6.2 11.2 6.4Q4.5 6.2 4.2 4.2Z" fill="#8d9dbb" stroke="#60709a" stroke-width="0.7"/><path d="M5 16L8 13.3L11 16.4L20.5 5.5L23.3 8.2L11 21.5Z" fill="url(#gChk)" stroke="#4f8f22" stroke-width="0.7" stroke-linejoin="round"/></g></svg>
<svg class="r" style="left:970px;top:89px" width="28" height="27" viewBox="0 0 28 27"><rect x="0.5" y="0.5" width="27" height="26" rx="1" fill="#eef4fb" stroke="#4a7cc6" stroke-width="1"/><rect x="1" y="1" width="26" height="5.8" fill="#6f9fdb"/><path d="M1 6.8H27M1 11.8H27M1 16.6H27M1 21.4H27M9.5 6.8V26.5M18.5 6.8V26.5" stroke="#4a7cc6" stroke-width="1"/></svg>
<svg class="r" style="left:1062px;top:88px" width="25" height="31" viewBox="0 0 25 31"><path d="M0.5 0.5H14.5L21.5 7.5V26.5H0.5Z" fill="url(#gDoc)" stroke="#7787c0" stroke-width="1"/><path d="M14.5 0.5V7.5H21.5" fill="#fff" stroke="#7787c0" stroke-width="1"/><path d="M9.5 15.5L21.8 28" stroke="#4f5b73" stroke-width="5.6" stroke-linecap="round"/><path d="M9.5 15.5L21.8 28" stroke="#b9c3d3" stroke-width="3.4" stroke-linecap="round"/><circle cx="9" cy="14.6" r="5.8" fill="#4f5b73"/><circle cx="9" cy="14.6" r="4.6" fill="#c8d1de"/><path d="M9.6 15.2L4.2 9.8L6.6 7.4L12 12.8Z" fill="#edf0f7"/><path d="M4.3 9.9L9.2 14.8M6.5 7.5L11.6 12.6" stroke="#4f5b73" stroke-width="0.9"/></svg>
<svg class="r" style="left:1149px;top:88px" width="30" height="30" viewBox="0 0 30 30"><circle cx="15" cy="15" r="15" fill="#4a80bb"/><path d="M10.2 11.2Q10.4 6.2 15.2 6.2Q20 6.2 20 10.6Q20 13 17.6 14.6Q16.4 15.4 16.4 17.6H13.2Q13 14.4 15 13Q16.6 11.8 16.6 10.8Q16.6 9.2 15 9.2Q13.4 9.2 13.3 11.2Z" fill="#fff"/><rect x="13.2" y="19.6" width="3.3" height="3.3" rx="0.8" fill="#fff"/></svg>
<svg class="r" style="left:1228px;top:90px" width="26" height="26" viewBox="0 0 26 26"><rect x="0.5" y="0.5" width="25" height="25" rx="1.5" fill="url(#gRed)" stroke="#a8201c" stroke-width="1"/><polygon points="13.00,10.10 16.70,6.40 19.60,9.30 15.90,13.00 19.60,16.70 16.70,19.60 13.00,15.90 9.30,19.60 6.40,16.70 10.10,13.00 6.40,9.30 9.30,6.40" fill="#e6ecf5" stroke="#a82a22" stroke-width="1" stroke-linejoin="round"/></svg>
<svg class="r" style="left:1893px;top:180px" width="12" height="8" viewBox="0 0 12 8"><path d="M1 7L6 2L11 7" stroke="#555" stroke-width="2.2" fill="none"/></svg>
<svg class="r" style="left:9px;top:199px" width="23" height="23" viewBox="0 0 23 23"><g transform="scale(1.0)"><ellipse cx="7.5" cy="16.6" rx="5" ry="0.9" fill="#000" opacity="0.3"/><circle cx="8" cy="8" r="7.2" fill="#f3f2f6" stroke="#4a8fdc" stroke-width="1.3"/><circle cx="8" cy="8" r="6" fill="none" stroke="#a9d8f6" stroke-width="0.7"/><path d="M8.3 8.2L6.2 7.6" stroke="#222" stroke-width="1.1"/><circle cx="8.6" cy="8.4" r="1" fill="#111"/><path d="M9.5 11.2H20.5V17.6L18 20.2H9.5Z" fill="#f7f7f7" stroke="#b5b5b5" stroke-width="0.7"/><rect x="9.3" y="8.2" width="11.4" height="3" fill="#1e9a1e"/><rect x="10.4" y="8.7" width="9.2" height="1" fill="#5fcf4f" opacity="0.7"/><rect x="11" y="8.2" width="1.3" height="1.6" fill="#fff"/><rect x="16.8" y="8.2" width="1.3" height="1.6" fill="#fff"/></g></svg>
<svg class="r" style="left:82px;top:265px" width="25" height="32" viewBox="0 0 25 32"><g transform="scale(1.0)"><rect x="0.6" y="3.2" width="21.4" height="26" rx="1.5" fill="url(#gClip)" stroke="#c0782a" stroke-width="1.1"/><rect x="4" y="5" width="14.5" height="20.5" fill="#e4e9f1" stroke="#c98a3a" stroke-width="0.6"/><path d="M4.2 4.2Q4.5 2.6 8 2.4Q9 0.6 11.2 0.6Q13.4 0.6 14.4 2.4Q18 2.6 18.3 4.2Q18 6.2 11.2 6.4Q4.5 6.2 4.2 4.2Z" fill="#8d9dbb" stroke="#60709a" stroke-width="0.7"/><path d="M5 16L8 13.3L11 16.4L20.5 5.5L23.3 8.2L11 21.5Z" fill="url(#gChk)" stroke="#4f8f22" stroke-width="0.7" stroke-linejoin="round"/></g></svg>
<svg class="r" style="left:249px;top:264px" width="25" height="31" viewBox="0 0 25 31"><rect x="2" y="0.5" width="15" height="9" rx="1" fill="#f3f4f7" stroke="#76839c" stroke-width="1"/><rect x="3.5" y="3" width="12" height="2.5" fill="#c9cfda"/><path d="M0.5 7.5H18.5V26.5H0.5Z" fill="url(#gFold)" stroke="#d08a2a" stroke-width="1"/><path d="M7.5 7.5L9.5 10L11.5 7.5" fill="#8a96ad"/><polygon points="23.70,22.80 23.57,24.17 21.50,24.79 21.02,25.69 21.65,27.75 20.59,28.62 18.69,27.60 17.71,27.90 16.70,29.80 15.33,29.67 14.71,27.60 13.81,27.12 11.75,27.75 10.88,26.69 11.90,24.79 11.60,23.81 9.70,22.80 9.83,21.43 11.90,20.81 12.38,19.91 11.75,17.85 12.81,16.98 14.71,18.00 15.69,17.70 16.70,15.80 18.07,15.93 18.69,18.00 19.59,18.48 21.65,17.85 22.52,18.91 21.50,20.81 21.80,21.79" fill="url(#gGear)" stroke="#4b5a78" stroke-width="0.9" stroke-linejoin="round"/><circle cx="16.7" cy="22.8" r="2" fill="#d9b056" stroke="#4b5a78" stroke-width="0.8"/></svg>
<svg class="r" style="left:398px;top:264px" width="29" height="31" viewBox="0 0 29 31"><path d="M1 2Q1 1 2 1H16.5L23 7.5V27Q23 28 22 28H2Q1 28 1 27Z" fill="url(#gXl)" stroke="#1a7cc0" stroke-width="1.6"/><path d="M16.5 1.5V7.8H22.5" fill="#fff" stroke="#1a7cc0" stroke-width="1.4"/><path d="M14 19.5H19L21 22.5L23 19.5H27.5L23.5 24.5L28 30H23L21 27L19 30H14.5L18.5 24.5Z" fill="#8fd060" stroke="#3d8d1c" stroke-width="1"/></svg>
<div class="r" style="left:0px;top:1116px;width:1920px;height:4px;background:#f0f0f0;"></div>
<div class="r" style="left:0px;top:1120px;width:1920px;height:30px;background:#2b579a;"></div>
<div class="r" style="left:0px;top:1150px;width:1920px;height:9px;background:#0c0c0c;"></div>
<div class="r" style="left:680px;top:1150px;width:61px;height:9px;background:#414141;"></div>
<div class="r" style="left:1914px;top:1150px;width:1px;height:9px;background:#555;"></div>
<div class="t " style="left:1797px;top:1155.84px;font-size:12px;line-height:12px;color:#fff;font-weight:normal;letter-spacing:0px;">17:00</div>
</body></html>
